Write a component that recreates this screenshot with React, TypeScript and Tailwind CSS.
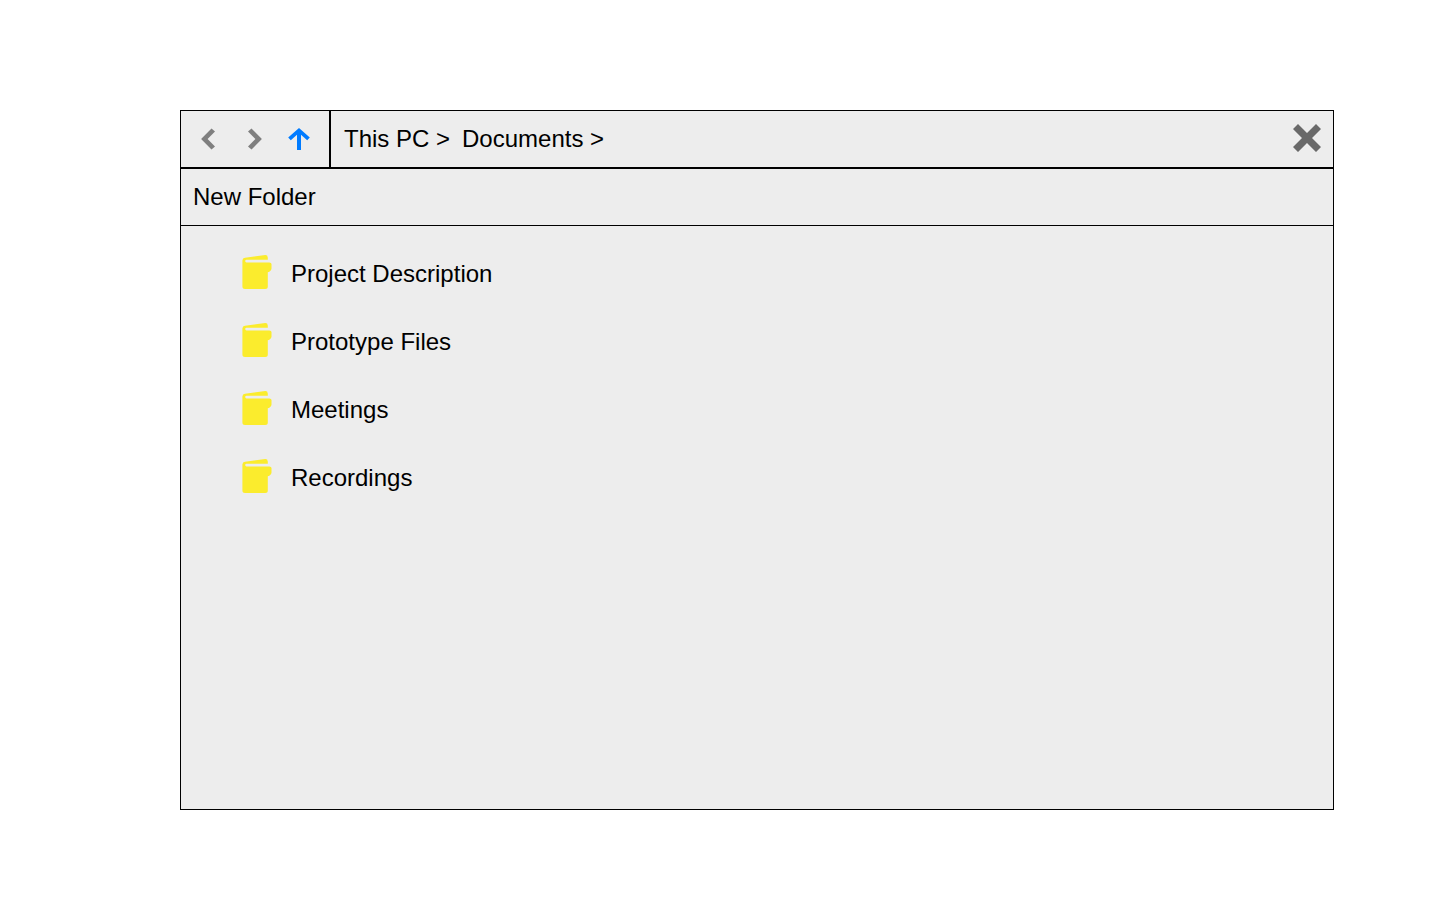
import React from "react";

const folders = ["Project Description", "Prototype Files", "Meetings", "Recordings"];

function BackIcon() {
  return (
    <svg viewBox="0 0 24 24" className="size-6 fill-[#7f7f7f]" aria-hidden="true">
      <path d="M4.1 12 14.5 1.4 18 4.6 10.6 12 18 19.4 14.5 22.6Z" />
    </svg>
  );
}

function ForwardIcon() {
  return (
    <svg viewBox="0 0 24 24" className="size-6 fill-[#7f7f7f]" aria-hidden="true">
      <path d="M19.9 12 9.5 1.4 6 4.6 13.4 12 6 19.4 9.5 22.6Z" />
    </svg>
  );
}

function UpIcon() {
  return (
    <svg viewBox="0 0 24 24" className="size-6 fill-[#007bff]" aria-hidden="true">
      <path d="M12 1 22.8 10.4 20.2 13.2 14 7.8V23H10V7.8L3.8 13.2 1.2 10.4Z" />
    </svg>
  );
}

function CloseIcon() {
  return (
    <svg viewBox="0 0 28 28" className="size-7 fill-[#696969]" aria-hidden="true">
      <path d="M5 0 14 9 23 0 28 5 19 14 28 23 23 28 14 19 5 28 0 23 9 14 0 5Z" />
    </svg>
  );
}

function FolderIcon() {
  return (
    <svg viewBox="0 0 30 34" className="h-[34px] w-[30px] fill-[#fbec2d]" aria-hidden="true">
      <path d="M3 2.7 23.3 .1Q25.6 0 25.8 2.5V4.8H4.5Q3.2 4.8 3.2 6.1T4.5 7.4H27.4Q29.5 7.4 29.5 9V13.5Q29.3 16.4 25.8 17.2V31.5Q25.8 34 23.3 34H3Q.4 34 .4 31.5V5.5Q.4 3 3 2.7Z" />
    </svg>
  );
}

export default function App() {
  return (
    <main className="min-h-screen bg-white px-[12.5%] pt-[110px] pb-[90px] font-['Liberation_Sans',Arial,sans-serif] text-2xl text-black">
      <section
        aria-label="File explorer"
        className="box-content flex min-h-[698px] w-[calc(100%+72px)] flex-col border border-black bg-[#ededed]"
      >
        <header className="flex h-[58px] items-stretch border-b-2 border-black">
          <nav aria-label="History" className="flex items-center gap-[21px] border-r-2 border-black pr-[18px] pl-4">
            <button type="button" aria-label="Back"><BackIcon /></button>
            <button type="button" aria-label="Forward"><ForwardIcon /></button>
            <button type="button" aria-label="Up"><UpIcon /></button>
          </nav>
          <nav aria-label="Path" className="flex flex-1 items-center gap-3 px-[13px]">
            <a href="#pc">This PC &gt;</a>
            <a href="#documents">Documents &gt;</a>
          </nav>
          <button type="button" aria-label="Close" className="px-3 pb-0.5"><CloseIcon /></button>
        </header>
        <div className="flex h-[57px] items-center border-b border-black px-3">
          <button type="button">New Folder</button>
        </div>
        <ul className="py-3">
          {folders.map((name) => (
            <li key={name}>
              <a href="#folder" className="flex h-[68px] items-center gap-[19px] pl-[61px]">
                <FolderIcon />
                <span className="pt-1">{name}</span>
              </a>
            </li>
          ))}
        </ul>
      </section>
    </main>
  );
}
